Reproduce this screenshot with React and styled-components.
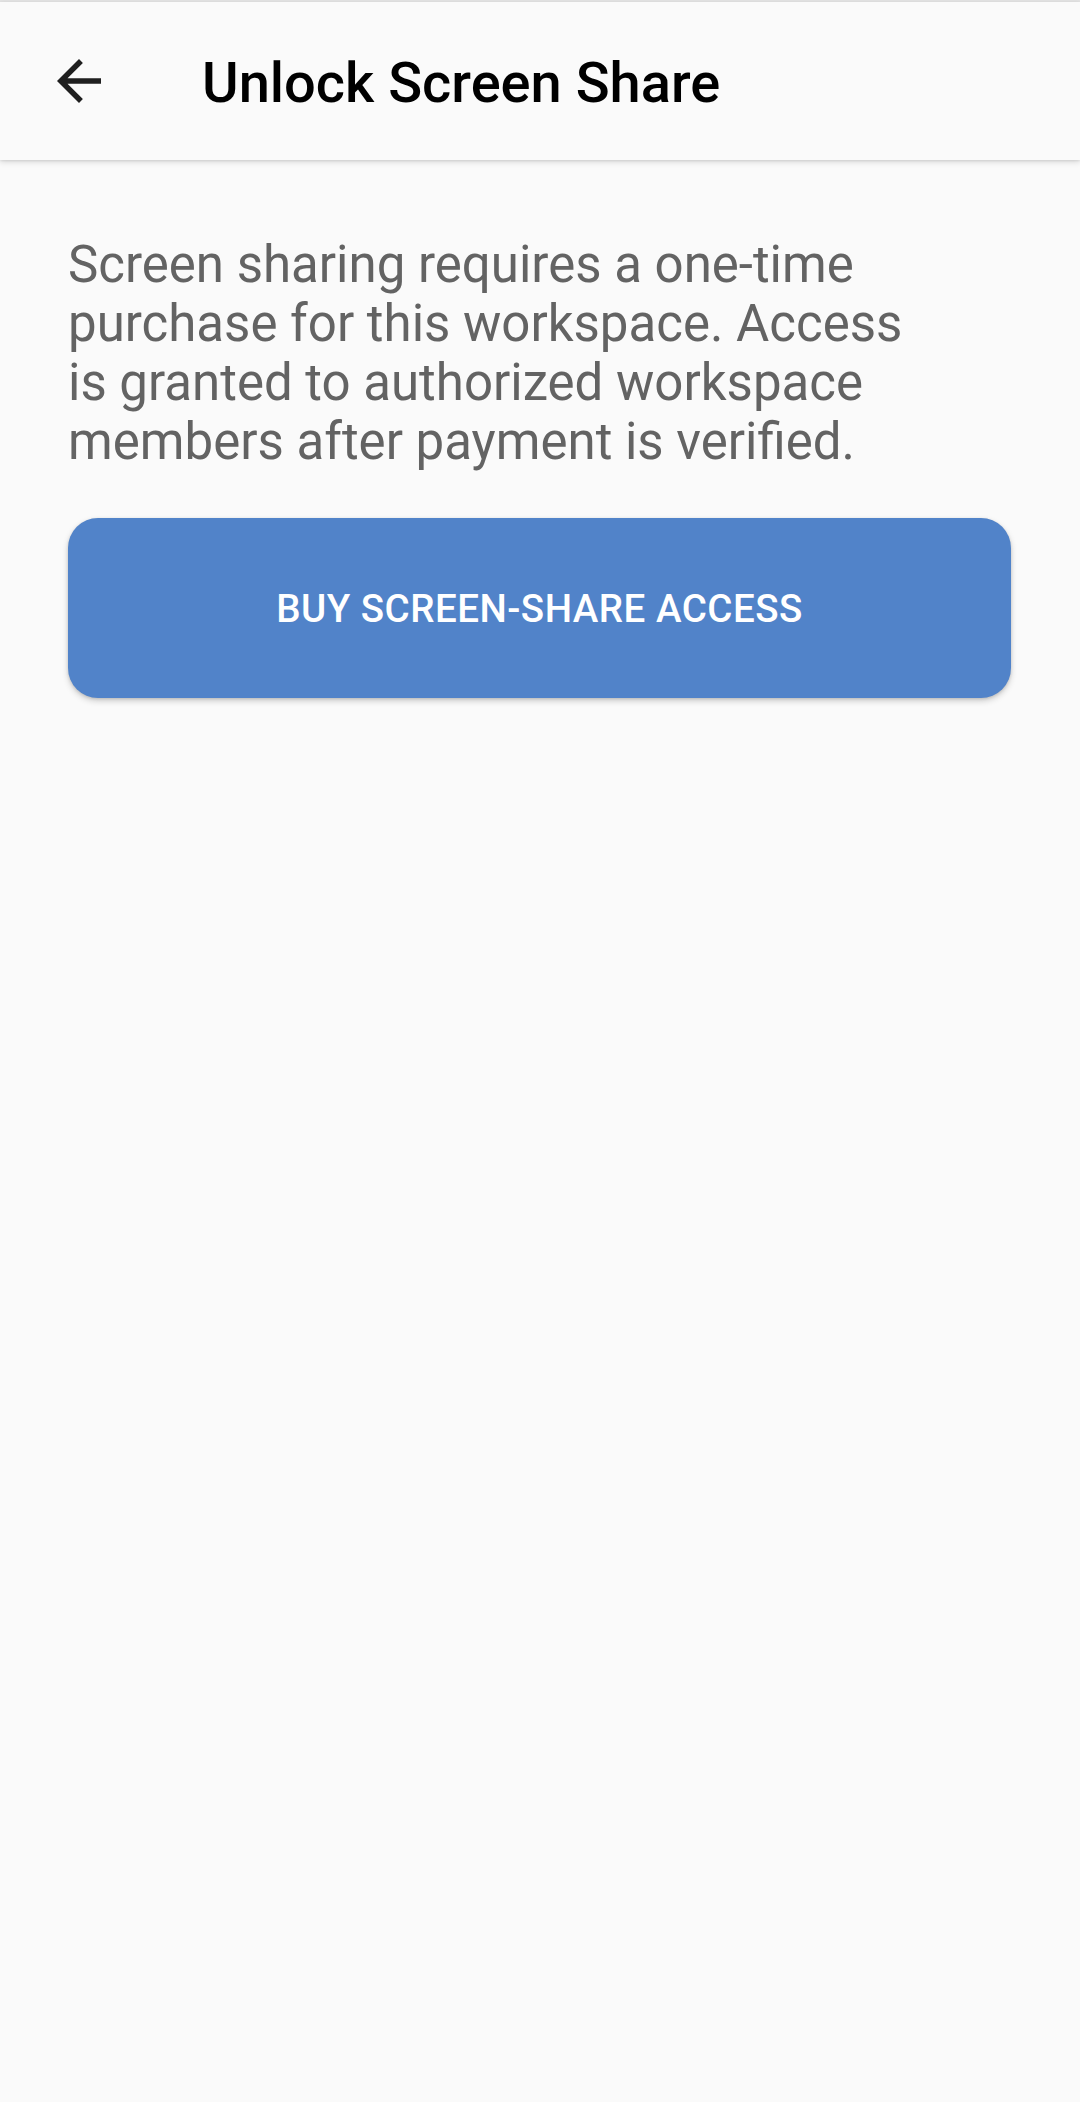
import React from "react";
import styled, { createGlobalStyle } from "styled-components";

const GlobalStyle = createGlobalStyle`
  html, body {
    margin: 0;
    padding: 0;
    background: #fafafa;
  }
  body {
    font-family: Roboto, "Noto Sans", sans-serif;
  }
`;

const Screen = styled.div`
  min-height: 2102px;
  background: #fafafa;
  border-top: 2px solid #e4e4e4;
  box-sizing: border-box;
`;

const AppBar = styled.header`
  height: 158px;
  display: flex;
  align-items: center;
  background: #fafafa;
  box-shadow: 0 2px 6px rgba(0, 0, 0, 0.14), 0 1px 2px rgba(0, 0, 0, 0.08);
  position: relative;
  z-index: 1;
`;

const IconButton = styled.button`
  width: 66px;
  height: 66px;
  margin-left: 46px;
  padding: 0;
  border: none;
  background: none;
  display: flex;
  align-items: center;
  justify-content: center;
  color: #1f1f1f;
  cursor: pointer;
  svg {
    display: block;
  }
`;

const Title = styled.h1`
  margin: 0 0 0 90px;
  padding-top: 4px;
  font-size: 56px;
  font-weight: 500;
  color: #000;
  letter-spacing: 0;
`;

const Content = styled.main`
  padding: 75px 69px 0 68px;
  display: flex;
  flex-direction: column;
`;

const Message = styled.p`
  margin: 0;
  max-width: 880px;
  font-size: 51px;
  line-height: 59px;
  color: #636363;
`;

const BuyButton = styled.button`
  margin-top: 47px;
  height: 180px;
  border: none;
  border-radius: 30px;
  background: #5183c9;
  color: #fff;
  font-family: Roboto, "Noto Sans", sans-serif;
  font-size: 38.5px;
  font-weight: 500;
  letter-spacing: 0.5px;
  text-transform: uppercase;
  box-shadow: 0 3px 6px rgba(0, 0, 0, 0.18), 0 1px 3px rgba(0, 0, 0, 0.12);
  cursor: pointer;
`;

function BackArrow() {
  return (
    <svg width="66" height="66" viewBox="0 0 24 24" fill="currentColor">
      <path d="M20 11H7.83l5.59-5.59L12 4l-8 8 8 8 1.41-1.41L7.83 13H20v-2z" />
    </svg>
  );
}

export default function App() {
  return (
    <Screen>
      <GlobalStyle />
      <AppBar>
        <IconButton aria-label="Back">
          <BackArrow />
        </IconButton>
        <Title>Unlock Screen Share</Title>
      </AppBar>
      <Content>
        <Message>
          Screen sharing requires a one-time purchase for this workspace. Access
          is granted to authorized workspace members after payment is verified.
        </Message>
        <BuyButton>Buy Screen-Share Access</BuyButton>
      </Content>
    </Screen>
  );
}
